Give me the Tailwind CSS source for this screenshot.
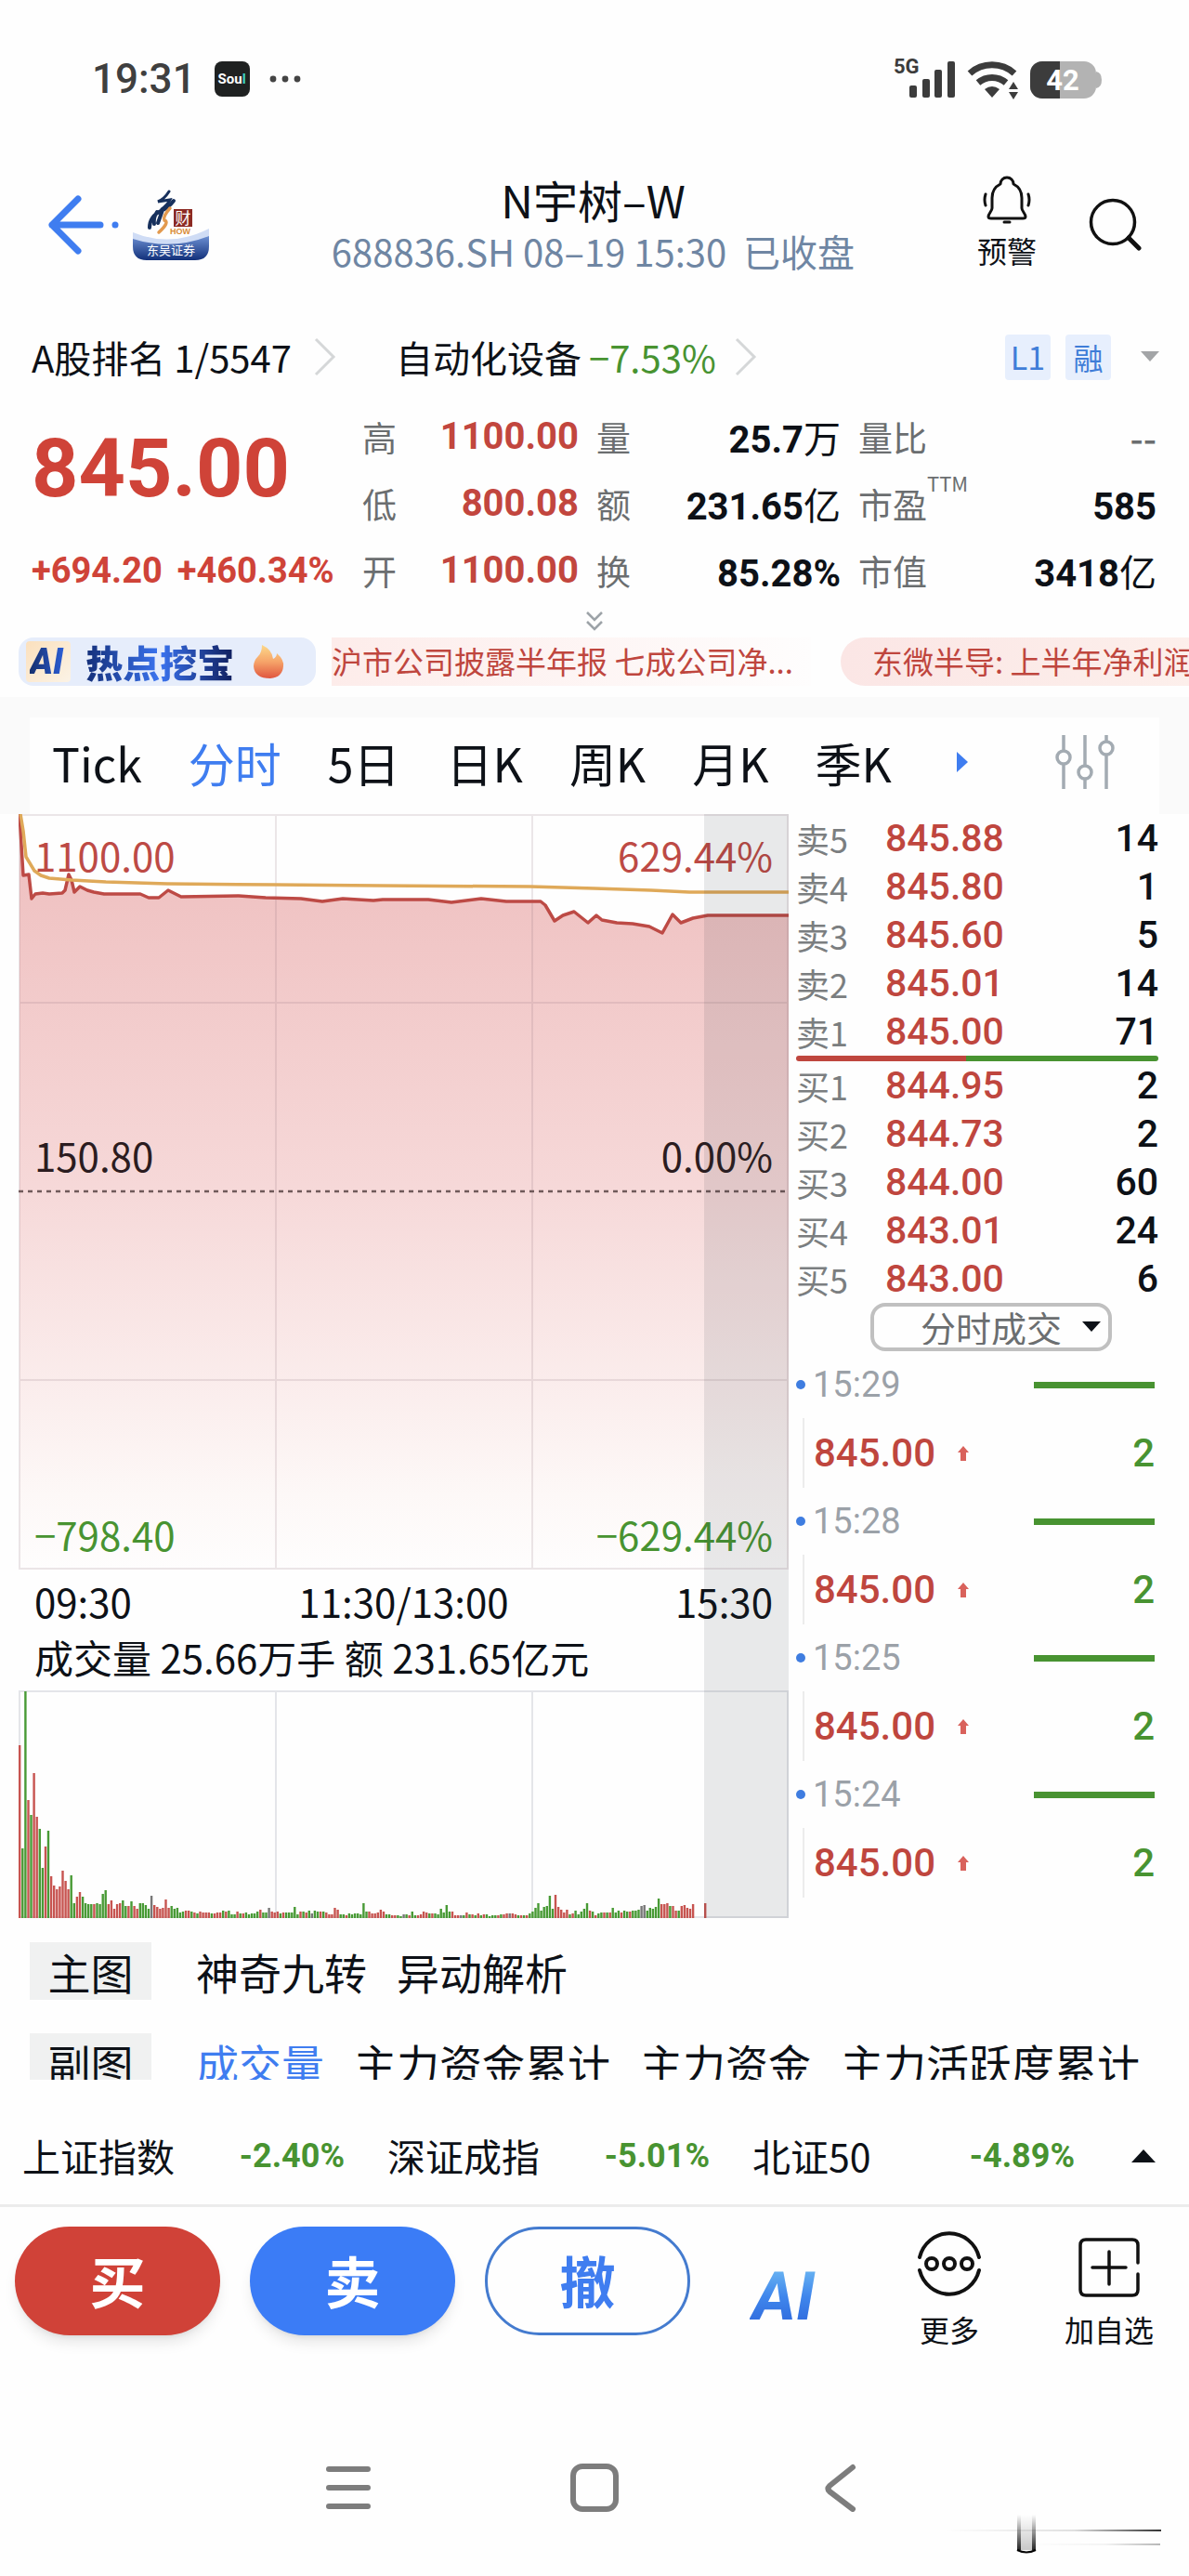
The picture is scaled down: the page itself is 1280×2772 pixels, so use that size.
<!DOCTYPE html>
<html lang="zh-CN">
  <head>
    <meta charset="UTF-8" />
    <meta name="viewport" content="width=device-width, initial-scale=1.0" />
    <script src="https://cdn.jsdelivr.net/npm/@tailwindcss/browser@4"></script>
    <title>N宇树-W 688836.SH</title>
  </head>
  <body class="bg-[#fefefe] text-[#0d1117] font-['Noto_Sans_CJK_SC',sans-serif] overflow-x-hidden">
    <!-- status bar -->
    <div class="flex items-center h-[170px] pl-[99px] pr-[94px] text-[#3f3f3f]">
      <span class="text-[44px] leading-none font-medium font-['Roboto',sans-serif]">19:31</span>
      <span class="ml-5 flex items-center justify-center size-[38px] rounded-lg bg-[#1f2121] text-white text-[15px] leading-none font-bold font-['Roboto',sans-serif]">Sou<span class="text-[#3fd0c0]">l</span></span>
      <svg class="ml-5 w-9 h-2" viewBox="0 0 36 8" fill="#444"><circle cx="5" cy="4" r="3.4" /><circle cx="18" cy="4" r="3.4" /><circle cx="31" cy="4" r="3.4" /></svg>
      <svg class="ml-auto w-[224px] h-[48px]" viewBox="0 0 224 48" fill="#3c3c3c">
        <text x="0" y="18" font-size="22" font-weight="700" font-family="Roboto">5G</text>
        <rect x="17" y="31" width="8" height="13" rx="2" />
        <rect x="31" y="24" width="8" height="20" rx="2" />
        <rect x="44" y="14" width="8" height="30" rx="2" />
        <rect x="58" y="5" width="8" height="39" rx="2" />
        <path d="M82 18a36 36 0 0 1 48 0" fill="none" stroke="#3c3c3c" stroke-width="7" />
        <path d="M91 28a23 23 0 0 1 30 0" fill="none" stroke="#3c3c3c" stroke-width="7" />
        <path d="M98 35q8-6 16 0l-8 9z" />
        <circle cx="129" cy="37" r="9" fill="#fefefe" />
        <path d="M124 35l5-8 5 8zM124 38h10l-5 8z" />
        <path d="M218 16q6 1 6 9t-6 9z" fill="#b3b3b3" />
        <rect x="147" y="5" width="71" height="40" rx="13" fill="#b3b3b3" />
        <path d="M179 5h-19a13 13 0 0 0-13 13v14a13 13 0 0 0 13 13h19z" />
        <text x="182" y="36" font-size="31" font-weight="700" fill="#fff" text-anchor="middle" font-family="Roboto">42</text>
      </svg>
    </div>

    <!-- title -->
    <header class="relative flex items-center h-36 mb-6 pl-[52px] pr-[50px]">
      <button aria-label="返回">
        <svg class="w-[76px] h-[76px]" viewBox="0 0 76 76" fill="none" stroke="#3f7df0" stroke-width="7" stroke-linecap="round" stroke-linejoin="round">
          <path d="M32 10L4 38l28 28M4 38h52" /><circle cx="72" cy="38" r="3.5" fill="#3f7df0" stroke="none" />
        </svg>
      </button>
      <svg class="ml-[15px] w-[82px] h-[76px]" viewBox="0 0 82 76">
        <defs><linearGradient id="lg" x1="0" x2="0" y1="0" y2="1"><stop offset="0" stop-color="#6f93d6" /><stop offset="1" stop-color="#12307a" /></linearGradient></defs>
        <path d="M0 49q41 15 82 0v12q0 15-15 15H15Q0 76 0 61z" fill="url(#lg)" />
        <path d="M0 46q41 17 82-4v8q-41 16-82 3z" fill="#cfdcf5" />
        <g fill="none" stroke="#17305c" stroke-linecap="round">
          <path d="M39 2q-5 8-12 11l13-2q-3 6-9 10" stroke-width="3" />
          <path d="M44 12q-6 8-14 11q-12 6-12 18M26 24q-4 6-3 13M32 22l-5 14" stroke-width="4" />
        </g>
        <path d="M40 20q-8 9-6 13q6 2-6 13" fill="none" stroke="#e39a4e" stroke-width="3.5" stroke-linecap="round" />
        <rect x="44" y="21" width="20" height="19" fill="#8c2a23" />
        <text x="54" y="37" font-size="17" fill="#fff" text-anchor="middle" font-family="Noto Sans CJK SC">财</text>
        <text x="51" y="48" font-size="9" font-weight="700" fill="#d98b35" text-anchor="middle" font-family="Liberation Sans">HOW</text>
        <text x="41" y="70" font-size="13" fill="#fff" text-anchor="middle" font-family="Noto Sans CJK SC">东吴证券</text>
      </svg>
      <div class="flex-1 flex flex-col items-center">
        <h1 class="text-[48px] leading-[57px]">N宇树–W</h1>
        <p class="text-[40px] leading-[55px] text-[#6f86a3] whitespace-pre">688836.SH 08–19 15:30  已收盘</p>
      </div>
      <button class="flex flex-col items-center">
        <svg class="w-[52px] h-[54px]" viewBox="0 0 52 54" fill="none" stroke="#111" stroke-width="3" stroke-linecap="round" stroke-linejoin="round">
          <path d="M26 2c-4 0-7 3-7 7c-6 3-9 9-9 15v11c0 3-4 6-4 9q0 2 3 2h34q3 0 3-2c0-3-4-6-4-9V24c0-6-3-12-9-15c0-4-3-7-7-7zM23 50h6M3 20q-2 6 0 12M49 20q2 6 0 12" />
        </svg>
        <span class="text-[32px] leading-[52px]">预警</span>
      </button>
      <button class="ml-14" aria-label="搜索">
        <svg class="w-[58px] h-[58px]" viewBox="0 0 58 58" fill="none" stroke="#111" stroke-width="3.5"><circle cx="26" cy="26" r="23.5" /><path d="M43 43l11 11" stroke-width="5" stroke-linecap="round" /></svg>
      </button>
    </header>

    <main>
      <!-- rank and sector -->
      <div class="flex items-center h-24 pl-[34px] pr-8 pb-1 text-[40px] whitespace-nowrap">
        <a href="#" class="flex items-center">A股排名 1/5547
          <svg class="ml-6 w-6 h-[42px]" viewBox="0 0 24 42" fill="none" stroke="#d5d7d8" stroke-width="3"><path d="M2 2l19 19L2 40" /></svg>
        </a>
        <a href="#" class="ml-16 flex items-center">自动化设备<span class="ml-2 text-[#489331]">−7.53%</span>
          <svg class="ml-5 w-6 h-[42px]" viewBox="0 0 24 42" fill="none" stroke="#d5d7d8" stroke-width="3"><path d="M2 2l19 19L2 40" /></svg>
        </a>
        <span class="ml-auto px-1 h-[49px] min-w-[49px] text-center leading-[48px] bg-[#e7effd] text-[#3f7dd8] text-[34px] rounded">L1</span>
        <span class="ml-4 h-[49px] w-[49px] text-center leading-[48px] bg-[#e7effd] text-[#3f7dd8] text-[32px] rounded">融</span>
        <svg class="ml-8 w-5 h-3" viewBox="0 0 20 12"><path d="M0 0h20L10 11z" fill="#a3a5a7" /></svg>
      </div>

      <!-- quote -->
      <section class="grid grid-cols-[337fr_233fr_263fr_321fr] gap-x-[19px] pl-[34px] pr-[35px] whitespace-nowrap">
        <div class="text-[#cf4338] font-bold font-['Roboto',sans-serif]">
          <p class="h-36 text-[88px] leading-[140px]">845.00</p>
          <p class="flex gap-4 text-[38px] leading-[72px]"><span>+694.20</span><span>+460.34%</span></p>
        </div>
        <dl class="text-[37px] leading-[72px] text-[#6b6e70]">
          <div class="flex justify-between h-[72px]"><dt>高</dt><dd class="text-[40px] font-bold text-[#c2463e] font-['Roboto',sans-serif]">1100.00</dd></div>
          <div class="flex justify-between h-[72px]"><dt>低</dt><dd class="text-[40px] font-bold text-[#c2463e] font-['Roboto',sans-serif]">800.08</dd></div>
          <div class="flex justify-between h-[72px]"><dt>开</dt><dd class="text-[40px] font-bold text-[#c2463e] font-['Roboto',sans-serif]">1100.00</dd></div>
        </dl>
        <dl class="text-[37px] leading-[72px] text-[#6b6e70]">
          <div class="flex justify-between h-[72px]"><dt>量</dt><dd class="text-[40px] text-[#0d1117]"><b class="font-['Roboto',sans-serif]">25.7</b>万</dd></div>
          <div class="flex justify-between h-[72px]"><dt>额</dt><dd class="text-[40px] text-[#0d1117]"><b class="font-['Roboto',sans-serif]">231.65</b>亿</dd></div>
          <div class="flex justify-between h-[72px]"><dt>换</dt><dd class="text-[40px] text-[#0d1117]"><b class="font-['Roboto',sans-serif]">85.28%</b></dd></div>
        </dl>
        <dl class="text-[37px] leading-[72px] text-[#6b6e70]">
          <div class="flex justify-between h-[72px]"><dt>量比</dt><dd class="text-[40px] font-medium">--</dd></div>
          <div class="flex justify-between h-[72px]"><dt class="flex">市盈<span class="text-[22px] leading-[26px]">TTM</span></dt><dd class="text-[40px] text-[#0d1117]"><b class="font-['Roboto',sans-serif]">585</b></dd></div>
          <div class="flex justify-between h-[72px]"><dt>市值</dt><dd class="text-[40px] text-[#0d1117]"><b class="font-['Roboto',sans-serif]">3418</b>亿</dd></div>
        </dl>
      </section>
      <button class="flex items-center justify-center w-full h-9" aria-label="展开">
        <svg class="w-[18px] h-[22px]" viewBox="0 0 18 22" fill="none" stroke="#9da3a8" stroke-width="2.5"><path d="M1 2l8 8 8-8M1 12l8 8 8-8" /></svg>
      </button>

      <!-- news ticker -->
      <div class="flex h-13 mb-3 pl-5 overflow-hidden whitespace-nowrap">
        <a href="#" class="shrink-0 flex items-center w-[320px] pl-2 rounded-2xl bg-[#e6edfb] font-black leading-[52px]">
          <span class="px-1 bg-linear-to-br from-[#fbe0bd] to-[#fbf3e6] rounded-sm"><span class="block pr-1 italic text-[38px] leading-[44px] font-['Roboto',sans-serif] bg-linear-to-r from-[#16306f] to-[#2d62e0] bg-clip-text text-transparent">AI</span></span>
          <span class="ml-4 text-[40px] bg-linear-to-r from-[#15307a] via-[#3b74f0] to-[#101f5e] bg-clip-text text-transparent">热点挖宝</span>
          <svg class="ml-5 w-[34px] h-[38px]" viewBox="0 0 34 38">
            <defs><linearGradient id="fire" x1="0" x2="0" y1="0" y2="1"><stop offset="0" stop-color="#fcd98a" /><stop offset=".5" stop-color="#f6a469" /><stop offset="1" stop-color="#e0563f" /></linearGradient></defs>
            <path d="M10 1q11 5 12 15q4-2 4-6q8 7 7 14q-1 12-14 13Q2 37 1 24q0-6 5-11q4-4 4-12z" fill="url(#fire)" />
          </svg>
        </a>
        <a href="#" class="shrink-0 ml-[17px] w-[516px] text-[33px] leading-[50px] text-[#bf463e] bg-linear-to-r from-[#fdecea] to-[#fefdfd]">沪市公司披露半年报 七成公司净...</a>
        <a href="#" class="shrink-0 ml-8 pl-[34px] pr-8 rounded-full text-[33px] leading-[50px] text-[#bf463e] bg-linear-to-r from-[#fbe6e5] to-[#fdf3ee]">东微半导: 上半年净利润同比增长</a>
      </div>

      <!-- period tabs -->
      <div class="bg-[#fafafa] pt-[22px] px-8">
        <nav class="flex items-center h-[104px] pl-6 pr-12 pb-2 gap-[50px] bg-[#fefefe] text-[50px] leading-none whitespace-nowrap">
          <button>Tick</button>
          <button class="text-[#3f7df0]">分时</button>
          <button>5日</button>
          <button>日K</button>
          <button>周K</button>
          <button>月K</button>
          <button>季K</button>
          <svg class="ml-5 w-3 h-6" viewBox="0 0 12 24"><path d="M0 1v22l12-11z" fill="#3f7df0" /></svg>
          <button class="ml-auto" aria-label="设置">
            <svg class="w-16 h-[60px]" viewBox="0 0 64 60" fill="#fefefe" stroke="#a3abb2" stroke-width="3.5">
              <path d="M9 1v58M32 1v58M55 1v58" /><circle cx="9" cy="25" r="7" /><circle cx="32" cy="41" r="7" /><circle cx="55" cy="15" r="7" />
            </svg>
          </button>
        </nav>
      </div>

      <div class="grid grid-cols-[829fr_390fr] gap-x-2 pl-5 pr-[33px]">
        <!-- charts -->
        <section class="relative text-[42px] whitespace-nowrap">
          <div class="relative">
            <svg class="block w-full h-[813px]" viewBox="0 0 829 813" preserveAspectRatio="none" fill="none">
              <defs><linearGradient id="area" x1="0" x2="0" y1="0" y2="813" gradientUnits="userSpaceOnUse"><stop offset="0" stop-color="#efbfbf" /><stop offset=".12" stop-color="#f0c4c4" /><stop offset=".49" stop-color="#f6d8d8" /><stop offset=".9" stop-color="#fdf8f7" /><stop offset="1" stop-color="#fefdfd" /></linearGradient></defs>
              <path fill="url(#area)" d="M1 0L5 66L11 65L14 91L18 86L26 85L33 86L47 85L50 82L54 65L57 71L60 84L66 78L74 82L81 84L92 86L131 86L140 90L151 90L161 82L175 89L237 88L266 90L304 91L327 94L349 91L382 93L392 92L441 92L466 95L498 91L525 94L562 94L567 98L577 115L586 109L598 105L613 117L622 109L628 114L644 117L661 118L679 121L693 128L704 108L713 117L726 112L742 109L829 109V813H1z" />
              <path stroke="#8a6a76" stroke-opacity=".16" stroke-width="2" d="M1 1H828V812H1zM277 0V813M553 0V813M0 203H829M0 609H829" />
              <path stroke="#705a5a" stroke-width="2.5" stroke-dasharray="5 5" d="M0 406H829" />
              <path stroke="#bd4a45" stroke-width="3.5" stroke-linejoin="round" d="M1 0L5 66L11 65L14 91L18 86L26 85L33 86L47 85L50 82L54 65L57 71L60 84L66 78L74 82L81 84L92 86L131 86L140 90L151 90L161 82L175 89L237 88L266 90L304 91L327 94L349 91L382 93L392 92L441 92L466 95L498 91L525 94L562 94L567 98L577 115L586 109L598 105L613 117L622 109L628 114L644 117L661 118L679 121L693 128L704 108L713 117L726 112L742 109L829 109" />
              <path stroke="#dfa959" stroke-width="3.5" stroke-linejoin="round" d="M2 0L5 18L8 46L17 61L24 66L33 69L57 71L94 73L160 75L276 76L388 77L551 78L620 80L681 82L722 84L829 84" />
            </svg>
            <div class="absolute inset-0 flex flex-col justify-between px-[17px] pt-[18px] pb-[12px] leading-[52px]">
              <div class="flex justify-between text-[#bd4a45]"><span>1100.00</span><span>629.44%</span></div>
              <div class="flex justify-between mb-[85px] text-[#2b1c20]"><span>150.80</span><span>0.00%</span></div>
              <div class="flex justify-between text-[#489331]"><span>−798.40</span><span>−629.44%</span></div>
            </div>
          </div>
          <div class="flex justify-between px-[17px] leading-[68px]"><span>09:30</span><span>11:30/13:00</span><span>15:30</span></div>
          <p class="px-[17px] h-[62px] leading-[52px]">成交量 25.66万手 额 231.65亿元</p>
          <svg id="volume" class="block w-full h-[245px]" viewBox="0 0 829 245" preserveAspectRatio="none">
            <path stroke="#e4e5e9" stroke-width="2" fill="none" d="M1 1H828V244H1zM277 0V245M553 0V245" />
          </svg>
          <!-- after-hours session -->
          <div class="absolute right-0 inset-y-0 w-[11%] bg-[#28323c]/10"></div>
        </section>

        <!-- order book -->
        <aside class="whitespace-nowrap">
          <table class="w-full text-[41px] leading-none">
            <tbody id="asks"></tbody>
          </table>
          <div class="flex h-[6px] rounded-full overflow-hidden"><span class="w-[47%] bg-[#bf463e]"></span><span class="flex-1 bg-[#489331]"></span></div>
          <table class="w-full text-[41px] leading-none">
            <tbody id="bids"></tbody>
          </table>
          <div class="relative w-[260px] ml-20">
            <label for="detail" class="sr-only">明细类型</label>
            <select id="detail" class="appearance-none block w-full h-[52px] pl-[50px] border-4 border-[#c0c0c0] rounded-2xl text-[38px] leading-none text-[#6b6e70] bg-transparent">
              <option>分时成交</option>
            </select>
            <svg class="absolute right-3 top-5 w-5 h-[11px] pointer-events-none" viewBox="0 0 20 11"><path d="M0 0h20L10 11z" fill="#0d1117" /></svg>
          </div>
          <ul id="trades"></ul>
        </aside>
      </div>

      <!-- indicator pickers -->
      <div class="pt-[26px] pl-8 text-[46px] leading-[62px] whitespace-nowrap">
        <div class="flex gap-8">
          <span class="w-[131px] mr-4 text-center bg-[#f0f1f1]">主图</span>
          <button>神奇九转</button>
          <button>异动解析</button>
        </div>
        <div class="flex gap-8 mt-[36px] h-[50px] overflow-hidden">
          <span class="w-[131px] mr-4 text-center bg-[#f0f1f1]">副图</span>
          <button class="h-[62px] text-[#3f7df0]">成交量</button>
          <button class="h-[62px]">主力资金累计</button>
          <button class="h-[62px]">主力资金</button>
          <button class="h-[62px]">主力活跃度累计</button>
        </div>
      </div>
    </main>

    <footer>
      <!-- index strip -->
      <div class="flex items-center mt-[34px] h-[103px] pl-6 pr-9 pb-1 text-[41px] border-b-3 border-[#ececec] whitespace-nowrap">
        <div class="flex justify-between w-[347px] mr-[46px]"><span>上证指数</span><b class="text-[36px] leading-[62px] text-[#489331] font-['Roboto',sans-serif]">-2.40%</b></div>
        <div class="flex justify-between w-[347px] mr-[46px]"><span>深证成指</span><b class="text-[36px] leading-[62px] text-[#489331] font-['Roboto',sans-serif]">-5.01%</b></div>
        <div class="flex justify-between w-[347px]"><span>北证50</span><b class="text-[36px] leading-[62px] text-[#489331] font-['Roboto',sans-serif]">-4.89%</b></div>
        <svg class="ml-auto w-[26px] h-[14px]" viewBox="0 0 26 14"><path d="M0 14h26L13 0z" fill="#0d1117" /></svg>
      </div>

      <!-- actions -->
      <div class="flex items-start gap-8 pt-[21px] pl-4 pr-[38px] text-[60px] font-bold">
        <button class="flex-[0_1_221px] h-[117px] pb-1 rounded-full bg-[#d04238] text-white shadow-lg">买</button>
        <button class="flex-[0_1_221px] h-[117px] pb-1 rounded-full bg-[#3b7cf6] text-white shadow-lg">卖</button>
        <button class="flex-[0_1_221px] h-[117px] pb-1 rounded-full border-3 border-[#447bcf] text-[#3f7df0]">撤</button>
        <button class="ml-8 mt-[48px]" aria-label="AI">
          <svg class="w-[80px] h-[54px]" viewBox="0 0 80 54">
            <defs><linearGradient id="ai" x1="0" x2="0" y1="0" y2="1"><stop offset="0" stop-color="#7cc8f5" /><stop offset=".5" stop-color="#3f86ec" /><stop offset="1" stop-color="#2a5fd6" /></linearGradient></defs>
            <text x="3" y="52" font-size="72" font-weight="700" font-style="italic" font-family="Roboto" fill="url(#ai)">AI</text>
          </svg>
        </button>
        <div class="flex gap-[90px] ml-auto font-normal">
          <button class="flex flex-col items-center pt-1">
            <svg class="w-[68px] h-[72px]" viewBox="0 0 68 72" fill="none" stroke="#111" stroke-width="4" stroke-linecap="round">
              <path d="M2 29a33 34 0 0 1 64 0M2 43a33 34 0 0 0 64 0" /><circle cx="15" cy="36" r="6" /><circle cx="34" cy="36" r="6" /><circle cx="53" cy="36" r="6" />
            </svg>
            <span class="mt-3 text-[32px] leading-[44px]">更多</span>
          </button>
          <button class="flex flex-col items-center pt-3">
            <svg class="w-[66px] h-[64px]" viewBox="0 0 66 64" fill="none" stroke="#111" stroke-width="3.5" stroke-linecap="round">
              <path d="M64 27V8q0-6-6-6H8Q2 2 2 8v48q0 6 6 6h50q6 0 6-6V39M33 15v35M15 32h36" />
            </svg>
            <span class="mt-3 text-[32px] leading-[44px]">加自选</span>
          </button>
        </div>
      </div>

      <!-- system navigation -->
      <div class="relative flex justify-center items-center gap-[215px] mt-[86px] h-[126px] mb-[31px]">
        <svg class="w-12 h-[50px]" viewBox="0 0 48 50" stroke="#7d7d7d" stroke-width="6" stroke-linecap="round"><path d="M3 5h42M3 25h42M3 45h42" /></svg>
        <svg class="w-[52px] h-[52px]" viewBox="0 0 52 52" fill="none" stroke="#7d7d7d" stroke-width="6"><rect x="3" y="3" width="46" height="46" rx="10" /></svg>
        <svg class="w-12 h-[52px]" viewBox="0 0 48 52" fill="none" stroke="#7d7d7d" stroke-width="6" stroke-linecap="round" stroke-linejoin="round"><path d="M37 4L12 24q-3 3 0 6l25 19" /></svg>
        <svg class="absolute right-7 -bottom-2 w-[240px] h-[44px]" viewBox="0 0 240 44">
          <defs>
            <linearGradient id="fadeX"><stop offset="0" stop-color="#000" stop-opacity="0" /><stop offset=".6" stop-color="#000" stop-opacity=".12" /><stop offset="1" stop-color="#000" stop-opacity=".8" /></linearGradient>
            <linearGradient id="fadeY" x1="0" x2="0" y1="0" y2="1"><stop offset="0" stop-color="#000" stop-opacity="0" /><stop offset="1" stop-color="#000" stop-opacity=".85" /></linearGradient>
          </defs>
          <rect x="5" y="18" width="233" height="2" fill="url(#fadeX)" />
          <rect x="90" y="33" width="147" height="2" fill="url(#fadeX)" opacity=".35" />
          <rect x="83" y="2" width="4" height="38" fill="url(#fadeY)" /><rect x="99" y="2" width="4" height="38" fill="url(#fadeY)" />
          <rect x="87" y="2" width="12" height="38" fill="url(#fadeY)" opacity=".25" />
          <path d="M83 40q10 5 20 0" fill="none" stroke="#000" stroke-width="2" />
        </svg>
      </div>
    </footer>

    <script>
      const asks = [["卖5", "845.88", 14], ["卖4", "845.80", 1], ["卖3", "845.60", 5], ["卖2", "845.01", 14], ["卖1", "845.00", 71]];
      const bids = [["买1", "844.95", 2], ["买2", "844.73", 2], ["买3", "844.00", 60], ["买4", "843.01", 24], ["买5", "843.00", 6]];
      const row = ([label, price, size]) => `
        <tr class="h-[52px]">
          <th scope="row" class="w-[96px] p-0 text-left font-normal text-[36px] leading-none text-[#7b7e80]">${label}</th>
          <td class="p-0 font-medium font-['Roboto',sans-serif] text-[#bf463e]">${price}</td>
          <td class="p-0 text-right font-medium font-['Roboto',sans-serif]">${size}</td>
        </tr>`;
      document.getElementById("asks").innerHTML = asks.map(row).join("");
      document.getElementById("bids").innerHTML = bids.map(row).join("");

      const trades = [["15:29", "845.00", 2], ["15:28", "845.00", 2], ["15:25", "845.00", 2], ["15:24", "845.00", 2]];
      document.getElementById("trades").innerHTML = trades.map(([time, price, size]) => `
        <li class="pr-1">
          <div class="flex items-center h-[72px] text-[38px] text-[#9ba1a8] font-['Roboto',sans-serif]">
            <i class="size-[10px] mr-2 rounded-full bg-[#3f7de0]"></i>${time}
            <i class="ml-auto w-[130px] h-[7px] bg-[#489331]"></i>
          </div>
          <div class="flex items-center h-[75px] ml-[7px] pl-[10px] border-l-2 border-[#ececec] text-[42px] font-medium font-['Roboto',sans-serif]">
            <span class="text-[#bf463e]">${price}</span>
            <svg class="ml-6 w-3 h-4" viewBox="0 0 12 16"><path d="M6 0l6 7H9v9H3V7H0z" fill="#d9625c" /></svg>
            <span class="ml-auto text-[#489331]">${size}</span>
          </div>
        </li>`).join("");

      // one bar per minute: r = up, g = down, k = flat
      const bars = "r186 g75 g244 r127 g111 r156 r109 g96 g54 r77 g94 r45 r35 r31 r34 r51 r40 r31 g46 g16 r23 r28 g23 g16 g15 g15 r15 g16 g15 g26 g30 r15 r19 r10 r15 r16 g19 g13 r13 g18 r13 r10 g16 g16 g14 g10 k24 r14 r12 r10 r11 r20 r11 g13 g10 g11 g6 g7 r8 r8 g7 r6 g5 r7 r6 r6 r6 g5 r5 r6 r6 g8 r7 g8 g4 g4 r7 g5 r5 g6 g4 g5 g5 g7 r9 g6 g6 k11 r7 r6 r7 g5 r6 g6 g6 g6 g12 g4 r7 g7 r6 g8 k5 g8 g7 r7 g7 r6 r4 r4 r11 r9 g4 g4 r3 g5 g4 g5 g5 g4 g16 g7 r7 r5 r5 r6 r9 r7 g4 g4 r3 r3 g3 g2 k4 g4 r3 g7 g3 r3 r4 r7 r6 g5 r5 g5 g4 g10 g6 g14 g7 r7 r3 r3 k3 g3 r6 g4 r4 g3 r5 g3 r4 g4 g2 g3 g3 r3 g4 r4 r5 k5 r5 r4 g3 r3 g3 r3 g5 g7 g11 g16 g8 g12 g13 g24 g10 r25 r12 r9 r6 r9 g4 r5 g8 g4 g7 g10 g16 r8 g7 r3 g5 g6 r6 g6 r6 g11 g6 g8 r6 g8 g7 r7 g8 g8 g9 k13 k14 g8 g11 g10 g12 g21 r15 r15 r16 g13 r13 r8 g8 r13 r14 r11 r10 r15";
      const fill = { r: "#c75450", g: "#489a35", k: "#777" };
      const list = bars.split(" ");
      const step = 728 / list.length;
      let out = "";
      list.forEach((b, i) => {
        const h = +b.slice(1);
        out += `<rect x="${(i * step).toFixed(1)}" y="${245 - h}" width="2.4" height="${h}" fill="${fill[b[0]]}"/>`;
      });
      out += `<rect x="738" y="229" width="2.4" height="16" fill="${fill.r}"/>`;
      document.getElementById("volume").innerHTML += out;
    </script>
  </body>
</html>
